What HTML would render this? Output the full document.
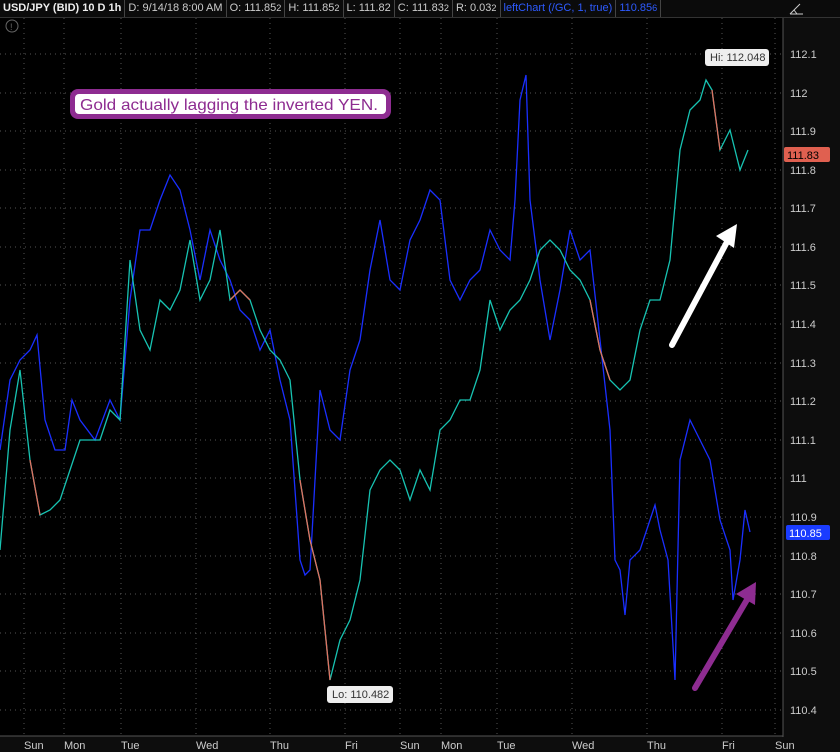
<!DOCTYPE html>
<html><head><meta charset="utf-8"><style>
body{margin:0;background:#000;width:840px;height:752px;overflow:hidden;font-family:"Liberation Sans",sans-serif;}
.top{position:absolute;left:0;top:0;width:840px;height:17px;background:#0b0b0b;border-bottom:1px solid #333;font-size:11px;color:#ccc;white-space:nowrap}
.top span{display:inline-block;padding:2px 3px;border-right:1px solid #444;height:13px}
</style></head><body>
<div class="top"><span style="color:#eee;font-weight:bold">USD/JPY (BID) 10 D 1h</span><span>D: 9/14/18 8:00 AM</span><span>O: 111.85<small>2</small></span><span>H: 111.85<small>2</small></span><span>L: 111.82</span><span>C: 111.83<small>2</small></span><span>R: 0.03<small>2</small></span><span style="color:#2e5bff">leftChart (/GC, 1, true)</span><span style="color:#2e5bff">110.85<small>6</small></span></div>
<svg width="840" height="752" style="position:absolute;left:0;top:0" font-family="Liberation Sans,sans-serif">
<rect x="783" y="18" width="57" height="734" fill="#0d0d0d"/>
<rect x="0" y="736" width="840" height="16" fill="#0d0d0d"/>
<line x1="783" y1="18" x2="783" y2="737" stroke="#555"/>
<line x1="0" y1="736" x2="783" y2="736" stroke="#555"/>
<g stroke="#555" stroke-dasharray="1,4">
<line x1="0" y1="54" x2="783" y2="54"/><line x1="0" y1="93" x2="783" y2="93"/><line x1="0" y1="131" x2="783" y2="131"/><line x1="0" y1="170" x2="783" y2="170"/><line x1="0" y1="208" x2="783" y2="208"/><line x1="0" y1="247" x2="783" y2="247"/><line x1="0" y1="285" x2="783" y2="285"/><line x1="0" y1="324" x2="783" y2="324"/><line x1="0" y1="363" x2="783" y2="363"/><line x1="0" y1="401" x2="783" y2="401"/><line x1="0" y1="440" x2="783" y2="440"/><line x1="0" y1="478" x2="783" y2="478"/><line x1="0" y1="517" x2="783" y2="517"/><line x1="0" y1="556" x2="783" y2="556"/><line x1="0" y1="594" x2="783" y2="594"/><line x1="0" y1="633" x2="783" y2="633"/><line x1="0" y1="671" x2="783" y2="671"/><line x1="0" y1="710" x2="783" y2="710"/>
<line x1="24" y1="18" x2="24" y2="736"/><line x1="64" y1="18" x2="64" y2="736"/><line x1="121" y1="18" x2="121" y2="736"/><line x1="196" y1="18" x2="196" y2="736"/><line x1="270" y1="18" x2="270" y2="736"/><line x1="345" y1="18" x2="345" y2="736"/><line x1="400" y1="18" x2="400" y2="736"/><line x1="441" y1="18" x2="441" y2="736"/><line x1="497" y1="18" x2="497" y2="736"/><line x1="572" y1="18" x2="572" y2="736"/><line x1="647" y1="18" x2="647" y2="736"/><line x1="722" y1="18" x2="722" y2="736"/><line x1="775" y1="18" x2="775" y2="736"/>
</g>
<g fill="#ccc" font-size="11">
<text x="790" y="58">112.1</text><text x="790" y="97">112</text><text x="790" y="135">111.9</text><text x="790" y="174">111.8</text><text x="790" y="212">111.7</text><text x="790" y="251">111.6</text><text x="790" y="289">111.5</text><text x="790" y="328">111.4</text><text x="790" y="367">111.3</text><text x="790" y="405">111.2</text><text x="790" y="444">111.1</text><text x="790" y="482">111</text><text x="790" y="521">110.9</text><text x="790" y="560">110.8</text><text x="790" y="598">110.7</text><text x="790" y="637">110.6</text><text x="790" y="675">110.5</text><text x="790" y="714">110.4</text>
<text x="24" y="749">Sun</text><text x="64" y="749">Mon</text><text x="121" y="749">Tue</text><text x="196" y="749">Wed</text><text x="270" y="749">Thu</text><text x="345" y="749">Fri</text><text x="400" y="749">Sun</text><text x="441" y="749">Mon</text><text x="497" y="749">Tue</text><text x="572" y="749">Wed</text><text x="647" y="749">Thu</text><text x="722" y="749">Fri</text><text x="775" y="749">Sun</text>
</g>
<circle cx="12" cy="26" r="6" fill="none" stroke="#666"/><text x="10" y="30" fill="#666" font-size="9">!</text>
<path d="M790 14 L800 4 M790 14 L803 14 M794 10 L797 14" stroke="#ccc" fill="none"/>
<polyline fill="none" stroke="#1a2fff" stroke-width="1.3" points="0,450 10,380 20,360 30,350 37,335 45,420 55,450 65,450 72,400 80,420 95,440 110,400 120,420 130,300 140,230 150,230 160,200 170,175 180,190 190,230 200,280 210,230 220,260 230,280 240,310 250,320 260,350 270,330 280,380 290,420 300,560 305,575 310,570 320,390 330,430 340,440 350,370 360,340 370,270 380,220 390,280 400,290 410,240 420,220 430,190 440,200 450,280 460,300 470,280 480,270 490,230 500,250 510,260 515,200 520,100 526,75 530,200 540,280 550,340 560,290 570,230 580,260 590,250 600,340 610,430 615,560 620,570 625,615 630,560 640,550 650,520 655,505 660,530 668,560 675,680 680,460 690,420 700,440 710,460 720,520 730,550 733,600 740,560 745,510 750,532"/>
<polyline fill="none" stroke="#17c3b2" stroke-width="1.3" points="0,550 10,430 20,370 30,460 40,515 50,510 60,500 70,470 80,440 90,440 100,440 110,410 120,420 130,260 140,330 150,350 160,300 170,310 180,290 190,240 200,300 210,280 220,230 230,300 240,290 250,300 260,330 270,350 280,360 290,380 300,480 310,540 320,580 330,680 340,640 350,620 360,580 370,490 380,470 390,460 400,470 410,500 420,470 430,490 440,430 450,420 460,400 470,400 480,370 490,300 500,330 510,310 520,300 530,280 540,250 550,240 560,250 570,270 580,280 590,300 600,350 610,380 620,390 630,380 640,330 650,300 660,300 670,260 680,150 690,110 700,100 706,80 712,90 720,150 730,130 740,170 748,150"/>
<g stroke="#e07060" stroke-width="1.3" fill="none"><polyline points="300,480 310,540 320,580 330,680"/><polyline points="712,90 720,150"/><polyline points="230,300 240,290 250,300"/><polyline points="590,300 600,350 610,380"/><polyline points="30,460 40,515"/></g>
<rect x="705" y="49" width="64" height="17" rx="3" fill="#eee"/><text x="710" y="61" font-size="11" fill="#333">Hi: 112.048</text>
<rect x="327" y="686" width="66" height="17" rx="3" fill="#eee"/><text x="332" y="698" font-size="11" fill="#333">Lo: 110.482</text>
<rect x="784" y="147" width="46" height="15" rx="2" fill="#e06050"/><text x="787" y="159" font-size="11" fill="#000">111.83</text>
<rect x="786" y="525" width="44" height="15" rx="2" fill="#1a3cff"/><text x="789" y="537" font-size="11" fill="#fff">110.85</text>
<rect x="70" y="89" width="321" height="30" rx="8" fill="#8e2c91"/><rect x="75" y="94" width="311" height="20" rx="4" fill="#fff"/>
<text x="80" y="110" font-size="16" fill="#8e2c91" textLength="298" lengthAdjust="spacingAndGlyphs">Gold actually lagging the inverted YEN.</text>
<g stroke="#fff" stroke-width="6" stroke-linecap="round"><line x1="672" y1="345" x2="728" y2="240"/></g><polygon points="737,224 716,236 734,248" fill="#fff"/>
<g stroke="#8e2c91" stroke-width="6" stroke-linecap="round"><line x1="695" y1="688" x2="748" y2="598"/></g><polygon points="756,582 736,594 755,605" fill="#8e2c91"/>
</svg>
</body></html>
